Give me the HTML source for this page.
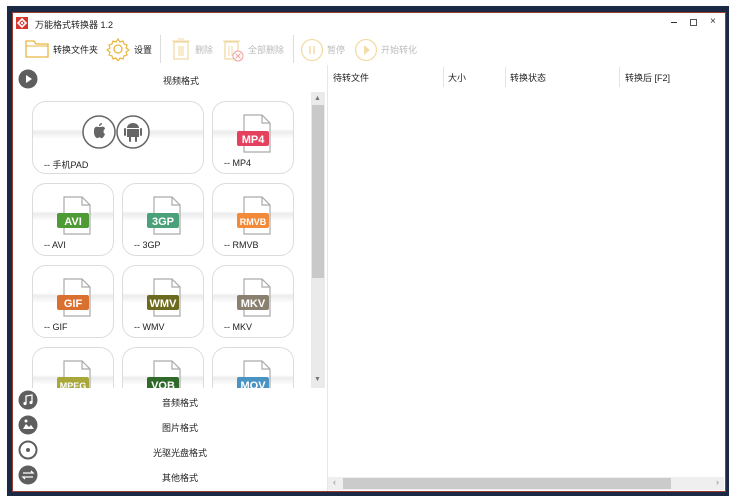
<!DOCTYPE html><html><head><meta charset="utf-8"><style>
*{margin:0;padding:0;box-sizing:border-box}
body{width:733px;height:498px;background:#fff;position:relative;overflow:hidden;font-family:"Liberation Sans","Noto Sans CJK SC",sans-serif;font-size:9px;color:#222}
.a{position:absolute}
.frame{left:7px;top:6px;width:722px;height:490px;background:#1b2a44}
.win{left:12px;top:12px;width:714px;height:480px;background:#fff;border:1px solid #9a3b30}
.card{position:absolute;width:82px;height:73px;border:1.5px solid #dcdcdc;border-radius:14px;background:linear-gradient(#fff 0,#fff 38%,#ececec 42%,#fff 52%,#fff 100%)}
.card .lb{position:absolute;left:11px;top:56px;font-size:9px;color:#222}
.fi{position:absolute;left:23px;top:12px}
.tb{color:#bbb}
.sep{position:absolute;width:1px;background:#ddd}
.hd{position:absolute;top:71px;font-size:9px}
</style></head><body>
<div class="a frame"></div>
<div class="a win"></div>
<!-- title -->
<div class="a" style="left:16px;top:17px;width:12px;height:12px;background:#d8362c"></div>
<svg class="a" style="left:16px;top:17px" width="12" height="12"><path d="M6 2 L10 6 L6 10 L2 6Z" fill="none" stroke="#fff" stroke-width="1.6"/><circle cx="6" cy="6" r="1.2" fill="#fff"/></svg>
<div class="a" style="left:35px;top:18px;font-size:9px">万能格式转换器 1.2</div>
<div class="a" style="left:671px;top:22px;width:6px;height:1px;background:#333"></div>
<div class="a" style="left:690px;top:19px;width:7px;height:7px;border:1px solid #555"></div>
<div class="a" style="left:710px;top:16px;font-size:10px;color:#333">×</div>
<!-- toolbar -->
<svg class="a" style="left:25px;top:38px" width="24" height="20"><path d="M1 3h8l2 3h12v13H1Z" fill="none" stroke="#e8b640" stroke-width="1.3"/><path d="M1 8h22" stroke="#e8b640" stroke-width="1"/></svg>
<div class="a" style="left:53px;top:43px">转换文件夹</div>
<svg class="a" style="left:106px;top:37px" width="24" height="24"><circle cx="12" cy="12" r="4" fill="none" stroke="#e8b640" stroke-width="1.3"/><path d="M12 2l2 3 3-1 1 3 3 1-1 3 3 2-3 2 1 3-3 1-1 3-3-1-2 3-2-3-3 1-1-3-3-1 1-3-3-2 3-2-1-3 3-1 1-3 3 1Z" fill="none" stroke="#e8b640" stroke-width="1.2"/></svg>
<div class="a" style="left:134px;top:43px">设置</div>
<div class="sep" style="left:160px;top:35px;height:28px"></div>
<svg class="a" style="left:171px;top:37px" width="20" height="24"><rect x="3" y="5" width="14" height="17" fill="none" stroke="#f0d7a0" stroke-width="1.2"/><path d="M1 4h18M7 2h6M8 9v10M10 9v10M12 9v10" stroke="#f0d7a0" stroke-width="1"/></svg>
<div class="a tb" style="left:195px;top:43px">删除</div>
<svg class="a" style="left:222px;top:37px" width="24" height="26"><rect x="3" y="5" width="13" height="17" fill="none" stroke="#f0d7a0" stroke-width="1.2"/><path d="M1 4h17M7 9v10M10 9v10" stroke="#f0d7a0"/><circle cx="16" cy="19" r="5" fill="#fff" stroke="#f2a0a0"/><path d="M13.5 16.5l5 5M18.5 16.5l-5 5" stroke="#f2a0a0"/></svg>
<div class="a tb" style="left:248px;top:43px">全部删除</div>
<div class="sep" style="left:293px;top:35px;height:28px"></div>
<svg class="a" style="left:300px;top:38px" width="24" height="24"><circle cx="12" cy="12" r="10.5" fill="none" stroke="#f3dca8" stroke-width="1.3"/><path d="M10 8v8M14 8v8" stroke="#f3dca8" stroke-width="1.5"/></svg>
<div class="a tb" style="left:327px;top:43px">暂停</div>
<svg class="a" style="left:354px;top:38px" width="24" height="24"><circle cx="12" cy="12" r="10.5" fill="none" stroke="#f3dca8" stroke-width="1.3"/><path d="M10 7l6 5-6 5Z" fill="#f3dca8"/></svg>
<div class="a tb" style="left:381px;top:43px">开始转化</div>
<!-- left header -->
<svg class="a" style="left:18px;top:69px" width="20" height="20"><circle cx="10" cy="10" r="9.5" fill="#5e5e5e"/><path d="M8 6l6 4-6 4Z" fill="#fff"/></svg>
<div class="a" style="left:163px;top:74px">视频格式</div>
<!-- cards area -->
<div class="a" style="left:13px;top:92px;width:298px;height:296px;overflow:hidden">
 <div class="card" style="left:19px;top:9px;width:172px">
  <svg class="fi" style="left:48px;top:12px" width="72" height="36"><circle cx="18" cy="18" r="16" fill="#fff" stroke="#666" stroke-width="1.5"/><circle cx="52" cy="18" r="16" fill="#fff" stroke="#666" stroke-width="1.5"/><path d="M18 11c1-2 3-2 3-2 0 2-2 3-3 3Zm-5 5c0-3 3-4 4-3 1 0 2 0 3-0 2-1 4 0 4 2-2 1-2 4 0 5-1 3-3 5-4 4-1-1-2-1-3 0-2 1-4-3-4-5Z" fill="#666"/><path d="M46 15h12v8h-12Zm0-1c0-3 3-5 6-5s6 2 6 5Z" fill="#666"/><path d="M44 15v6M60 15v6M49 23v4M55 23v4" stroke="#666" stroke-width="2" stroke-linecap="round"/></svg>
  <div class="lb">-- 手机PAD</div></div>
 <div id="c"></div>
</div>
<!-- scrollbar -->
<div class="a" style="left:311px;top:92px;width:14px;height:296px;background:#eaeaea"></div>
<div class="a" style="left:312px;top:105px;width:12px;height:173px;background:#c9c9c9"></div>
<div class="a" style="left:314px;top:95px;font-size:7px;color:#777">▲</div>
<div class="a" style="left:314px;top:376px;font-size:7px;color:#777">▼</div>
<!-- bottom categories -->
<svg class="a" style="left:18px;top:390px" width="20" height="20"><circle cx="10" cy="10" r="9.5" fill="#5e5e5e"/><path d="M8 13V6l6-1v7" fill="none" stroke="#fff" stroke-width="1.3"/><circle cx="7" cy="13.5" r="1.6" fill="#fff"/><circle cx="13" cy="12.5" r="1.6" fill="#fff"/></svg>
<div class="a" style="left:162px;top:396px">音频格式</div>
<svg class="a" style="left:18px;top:415px" width="20" height="20"><circle cx="10" cy="10" r="9.5" fill="#5e5e5e"/><path d="M5 14l3-5 3 3 2-2 3 4Z" fill="#fff"/><circle cx="8" cy="6" r="1.5" fill="#fff"/></svg>
<div class="a" style="left:162px;top:421px">图片格式</div>
<svg class="a" style="left:18px;top:440px" width="20" height="20"><circle cx="10" cy="10" r="8.5" fill="#fff" stroke="#5e5e5e" stroke-width="2"/><circle cx="10" cy="10" r="2" fill="#5e5e5e"/></svg>
<div class="a" style="left:153px;top:446px">光驱光盘格式</div>
<svg class="a" style="left:18px;top:465px" width="20" height="20"><circle cx="10" cy="10" r="9.5" fill="#5e5e5e"/><path d="M5 8h10l-2-2M15 12H5l2 2" fill="none" stroke="#fff" stroke-width="1.3"/></svg>
<div class="a" style="left:162px;top:471px">其他格式</div>
<!-- right panel -->
<div class="sep" style="left:327px;top:65px;height:426px;background:#e6e6e6"></div>
<div class="hd" style="left:333px">待转文件</div>
<div class="sep" style="left:443px;top:67px;height:20px;background:#e4e4e4"></div>
<div class="hd" style="left:448px">大小</div>
<div class="sep" style="left:505px;top:67px;height:20px;background:#e4e4e4"></div>
<div class="hd" style="left:510px">转换状态</div>
<div class="sep" style="left:619px;top:67px;height:20px;background:#e4e4e4"></div>
<div class="hd" style="left:625px">转换后 [F2]</div>
<div class="a" style="left:328px;top:477px;width:396px;height:13px;background:#efefef"></div>
<div class="a" style="left:343px;top:478px;width:328px;height:11px;background:#cbcbcb"></div>
<div class="a" style="left:333px;top:477px;font-size:9px;color:#888">‹</div>
<div class="a" style="left:716px;top:477px;font-size:9px;color:#888">›</div>
<script>
var d=[["MP4","#e5405e",199,9],["AVI","#4e9a35",19,91],["3GP","#4aa079",109,91],["RMVB","#f28a3a",199,91],["GIF","#d9702f",19,173],["WMV","#6b6a1e",109,173],["MKV","#8a8070",199,173],["MPEG","#a8a83a",19,255],["VOB","#2f6a2a",109,255],["MOV","#4a94c4",199,255]];
var h="";d.forEach(function(x){var fs=x[0].length>3?9:11;h+='<div class="card" style="left:'+x[2]+'px;top:'+x[3]+'px"><svg class="fi" width="40" height="40"><path d="M8 1h18l8 8v29H8Z" fill="#fff" stroke="#aaa" stroke-width="1.2"/><path d="M26 1v8h8" fill="none" stroke="#aaa" stroke-width="1.2"/><rect x="1" y="17" width="32" height="15" rx="2" fill="'+x[1]+'"/><text x="17" y="29" text-anchor="middle" font-family="Liberation Sans" font-weight="bold" font-size="'+fs+'" fill="#fff">'+x[0]+'</text></svg><div class="lb">-- '+x[0]+'</div></div>'});
document.getElementById("c").outerHTML=h;
</script>
</body></html>
